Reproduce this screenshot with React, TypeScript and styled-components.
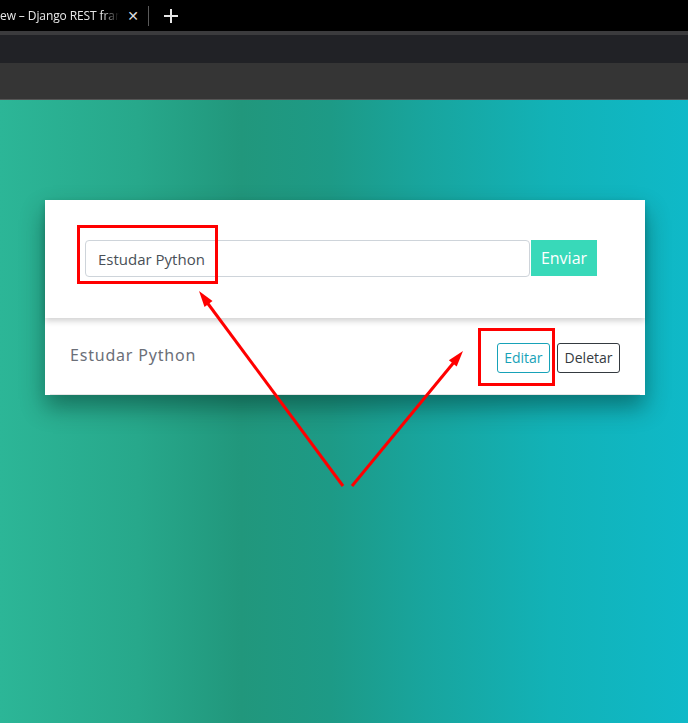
import React from "react";
import styled, { createGlobalStyle } from "styled-components";

const Global = createGlobalStyle`
  html, body { margin: 0; padding: 0; }
  body { width: 688px; height: 723px; overflow: hidden; background: #000; }
  * { box-sizing: border-box; }
`;

const Window = styled.div`
  position: relative;
  width: 688px;
  height: 723px;
  display: flex;
  flex-direction: column;
  font-family: "Open Sans", "Noto Sans", sans-serif;
`;

const TabStrip = styled.div`
  height: 31px;
  background: #000;
  display: flex;
  align-items: center;
  flex-shrink: 0;
`;

const Tab = styled.div`
  width: 148px;
  height: 31px;
  display: flex;
  align-items: center;
`;

const TabTitle = styled.span`
  flex: 1;
  min-width: 0;
  white-space: nowrap;
  color: #e8e8e8;
  font-family: "Open Sans", sans-serif;
  font-size: 12px;
  letter-spacing: -0.1px;
  -webkit-mask-image: linear-gradient(to right, #000 86%, transparent 100%);
  mask-image: linear-gradient(to right, #000 86%, transparent 100%);
`;

const TabClose = styled.span`
  width: 20px;
  flex-shrink: 0;
  color: #dcdcdc;
  font-size: 14px;
  line-height: 1;
  text-align: center;
  margin: 0 5px 0 4px;
  font-family: "DejaVu Sans", sans-serif;
`;

const TabDivider = styled.div`
  width: 1px;
  height: 20px;
  background: #5a5a5a;
`;

const NewTab = styled.div`
  margin-left: 14px;
  width: 16px;
  height: 16px;
  position: relative;
  &::before, &::after {
    content: "";
    position: absolute;
    background: #e6e6e6;
  }
  &::before { left: 7px; top: 1px; width: 2px; height: 14px; }
  &::after { top: 7px; left: 1px; width: 14px; height: 2px; }
`;

const Strip = styled.div<{ $h: number; $bg: string }>`
  height: ${(p) => p.$h}px;
  background: ${(p) => p.$bg};
  flex-shrink: 0;
`;

const Viewport = styled.main`
  flex: 1;
  background: linear-gradient(
    to right,
    #2cb697 0%,
    #27a88b 20%,
    #21977c 35%,
    #1d9a86 48%,
    #18a59e 62%,
    #12b2b7 80%,
    #0fb9c8 100%
  );
  padding-top: 100px;
  padding-left: 45px;
`;

const Card = styled.section`
  width: 600px;
  background: #fff;
  box-shadow: 0 12px 22px rgba(0, 40, 30, 0.45);
`;

const FormArea = styled.form`
  position: relative;
  z-index: 1;
  background: #fff;
  padding: 40px 48px 41px 40px;
  display: flex;
  box-shadow: 0 3px 6px rgba(0, 0, 0, 0.18);
`;

const TextInput = styled.input`
  flex: 1;
  height: 37px;
  border: 1px solid #ced4da;
  border-radius: 4px;
  padding: 0 12px;
  font-family: "Open Sans", sans-serif;
  font-size: 15px;
  color: #495057;
  outline: none;
`;

const SubmitButton = styled.button`
  width: 66px;
  height: 36px;
  margin-left: 1px;
  border: none;
  background: #38d9b9;
  color: #fff;
  font-family: "Open Sans", sans-serif;
  font-size: 16px;
  padding: 0;
`;

const ItemRow = styled.div`
  height: 77px;
  display: flex;
  align-items: center;
  padding: 3px 20px 0 20px;
  margin: 0 5px;
  border-bottom: 1px solid #e6e6e6;
`;

const ItemText = styled.span`
  flex: 1;
  margin-bottom: 5px;
  font-family: "Noto Sans", "Open Sans", sans-serif;
  font-size: 16px;
  letter-spacing: 0.8px;
  color: #6b6f78;
`;

const OutlineButton = styled.button<{ $color: string }>`
  height: 30px;
  padding: 0 6.5px;
  margin-left: 7px;
  background: #fff;
  border: 1px solid ${(p) => p.$color};
  border-radius: 3px;
  color: ${(p) => p.$color};
  font-family: "Open Sans", sans-serif;
  font-size: 14px;
`;

const Annotations = styled.svg`
  position: absolute;
  left: 0;
  top: 0;
  z-index: 5;
  pointer-events: none;
`;

export default function App() {
  return (
    <>
      <Global />
      <Window>
        <TabStrip>
          <Tab>
            <TabTitle>ew – Django REST fram</TabTitle>
            <TabClose>✕</TabClose>
          </Tab>
          <TabDivider />
          <NewTab />
        </TabStrip>
        <Strip $h={4} $bg="#3b3b3d" />
        <Strip $h={28} $bg="#212226" />
        <Strip $h={36} $bg="#353535" />
        <Strip $h={1} $bg="#555555" />
        <Viewport>
          <Card>
            <FormArea onSubmit={(e) => e.preventDefault()}>
              <TextInput defaultValue="Estudar Python" />
              <SubmitButton type="submit">Enviar</SubmitButton>
            </FormArea>
            <ItemRow>
              <ItemText>Estudar Python</ItemText>
              <OutlineButton $color="#17a2b8">Editar</OutlineButton>
              <OutlineButton $color="#343a40">Deletar</OutlineButton>
            </ItemRow>
          </Card>
        </Viewport>
        <Annotations width="688" height="723" viewBox="0 0 688 723">
          <g fill="none" stroke="#ff0000" strokeWidth="3">
            <rect x="78.5" y="226.5" width="138" height="56" />
            <rect x="479.5" y="329.5" width="74" height="55" />
            <line x1="343" y1="486" x2="206" y2="301" />
            <line x1="352" y1="486" x2="455" y2="361" />
          </g>
          <g fill="#ff0000">
            <polygon points="199,291 212.5,300.9 204.5,306.9" />
            <polygon points="463,351 456.7,366.6 448.9,360.2" />
          </g>
        </Annotations>
      </Window>
    </>
  );
}
